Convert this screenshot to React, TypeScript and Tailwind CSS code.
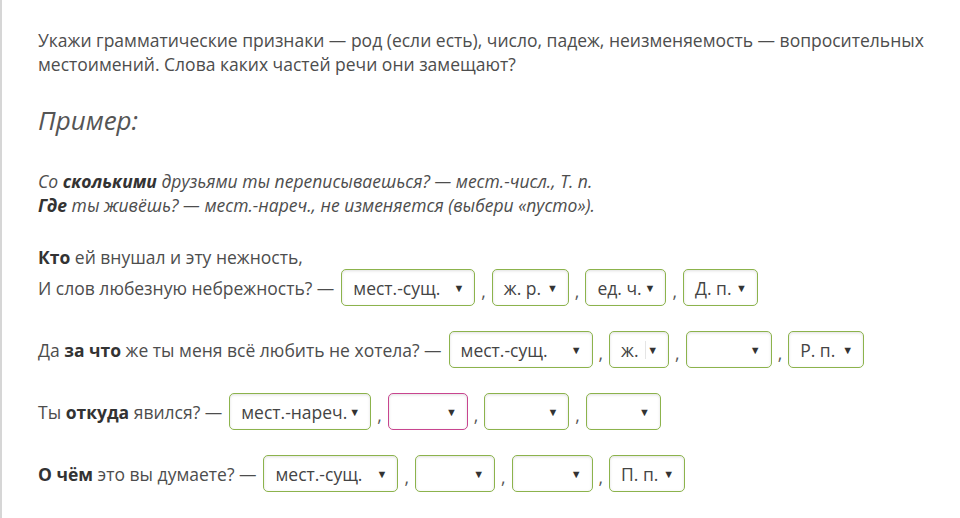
import React from "react";

type S = { label: string; w: number; pink?: boolean; bar?: boolean };

function Sel({ label, w, pink, bar }: S) {
  return (
    <span
      className={
        "inline-flex shrink-0 items-center justify-between h-[37px] rounded-[5px] border bg-white pl-[11px] pr-[10px] shadow-[inset_0_1px_3px_rgba(0,0,0,0.12)] " +
        (pink ? "border-[#c8458f]" : "border-[#8cb34c]")
      }
      style={{ width: w }}
    >
      <span className="flex items-center text-[17.5px] text-[#444]">
        {label}
        {bar && <span className="ml-[6px] inline-block h-[18px] w-px bg-[#e5e5e5]" />}
      </span>
      <span className="text-[11px] text-[#333] leading-none">▼</span>
    </span>
  );
}

function Comma() {
  return <span className="mx-[6px] self-end mb-[6px] text-[17.5px] text-[#555] leading-none">,</span>;
}

function Row({ items }: { items: S[] }) {
  return (
    <>
      {items.map((it, i) => (
        <React.Fragment key={i}>
          {i > 0 && <Comma />}
          <Sel {...it} />
        </React.Fragment>
      ))}
    </>
  );
}

export default function App() {
  return (
    <div
      className="w-[960px] h-[518px] bg-white border-l-2 border-[#d6d6d6] overflow-hidden text-[#4d4d4d]"
      style={{ fontFamily: '"Open Sans", "Noto Sans", sans-serif' }}
    >
      <div className="pl-[36px] pt-[28px] text-[17.5px] leading-[24px]">
        <p>
          Укажи грамматические признаки — род (если есть), число, падеж, неизменяемость — вопросительных
          местоимений. Слова каких частей речи они замещают?
        </p>
        <p className="mt-[27px] text-[26px] leading-[34px] italic text-[#555]">Пример:</p>
        <p className="mt-[32px] italic leading-[24px]">
          Со <b className="text-[#333]">сколькими</b> друзьями ты переписываешься? — мест.-числ., Т. п.
          <br />
          <b className="text-[#333]">Где</b> ты живёшь? — мест.-нареч., не изменяется (выбери «пусто»).
        </p>
        <p className="mt-[28px]">
          <b className="text-[#333]">Кто</b> ей внушал и эту нежность,
        </p>
        <div className="mt-[0px] flex items-center">
          <span className="mr-[7px] whitespace-nowrap">И слов любезную небрежность? —</span>
          <Row
            items={[
              { label: "мест.-сущ.", w: 134 },
              { label: "ж. р.", w: 77 },
              { label: "ед. ч.", w: 81 },
              { label: "Д. п.", w: 75 },
            ]}
          />
        </div>
        <div className="mt-[25px] flex items-center">
          <span className="mr-[7px] whitespace-nowrap">
            Да <b className="text-[#333]">за что</b> же ты меня всё любить не хотела? —
          </span>
          <Row
            items={[
              { label: "мест.-сущ.", w: 144 },
              { label: "ж.", w: 60, bar: true },
              { label: "", w: 86 },
              { label: "Р. п.", w: 76 },
            ]}
          />
        </div>
        <div className="mt-[25px] flex items-center">
          <span className="mr-[7px] whitespace-nowrap">
            Ты <b className="text-[#333]">откуда</b> явился? —
          </span>
          <Row
            items={[
              { label: "мест.-нареч.", w: 142 },
              { label: "", w: 80, pink: true },
              { label: "", w: 85 },
              { label: "", w: 75 },
            ]}
          />
        </div>
        <div className="mt-[25px] flex items-center">
          <span className="mr-[7px] whitespace-nowrap">
            <b className="text-[#333]">О чём</b> это вы думаете? —
          </span>
          <Row
            items={[
              { label: "мест.-сущ.", w: 135 },
              { label: "", w: 80 },
              { label: "", w: 81 },
              { label: "П. п.", w: 76 },
            ]}
          />
        </div>
      </div>
    </div>
  );
}
